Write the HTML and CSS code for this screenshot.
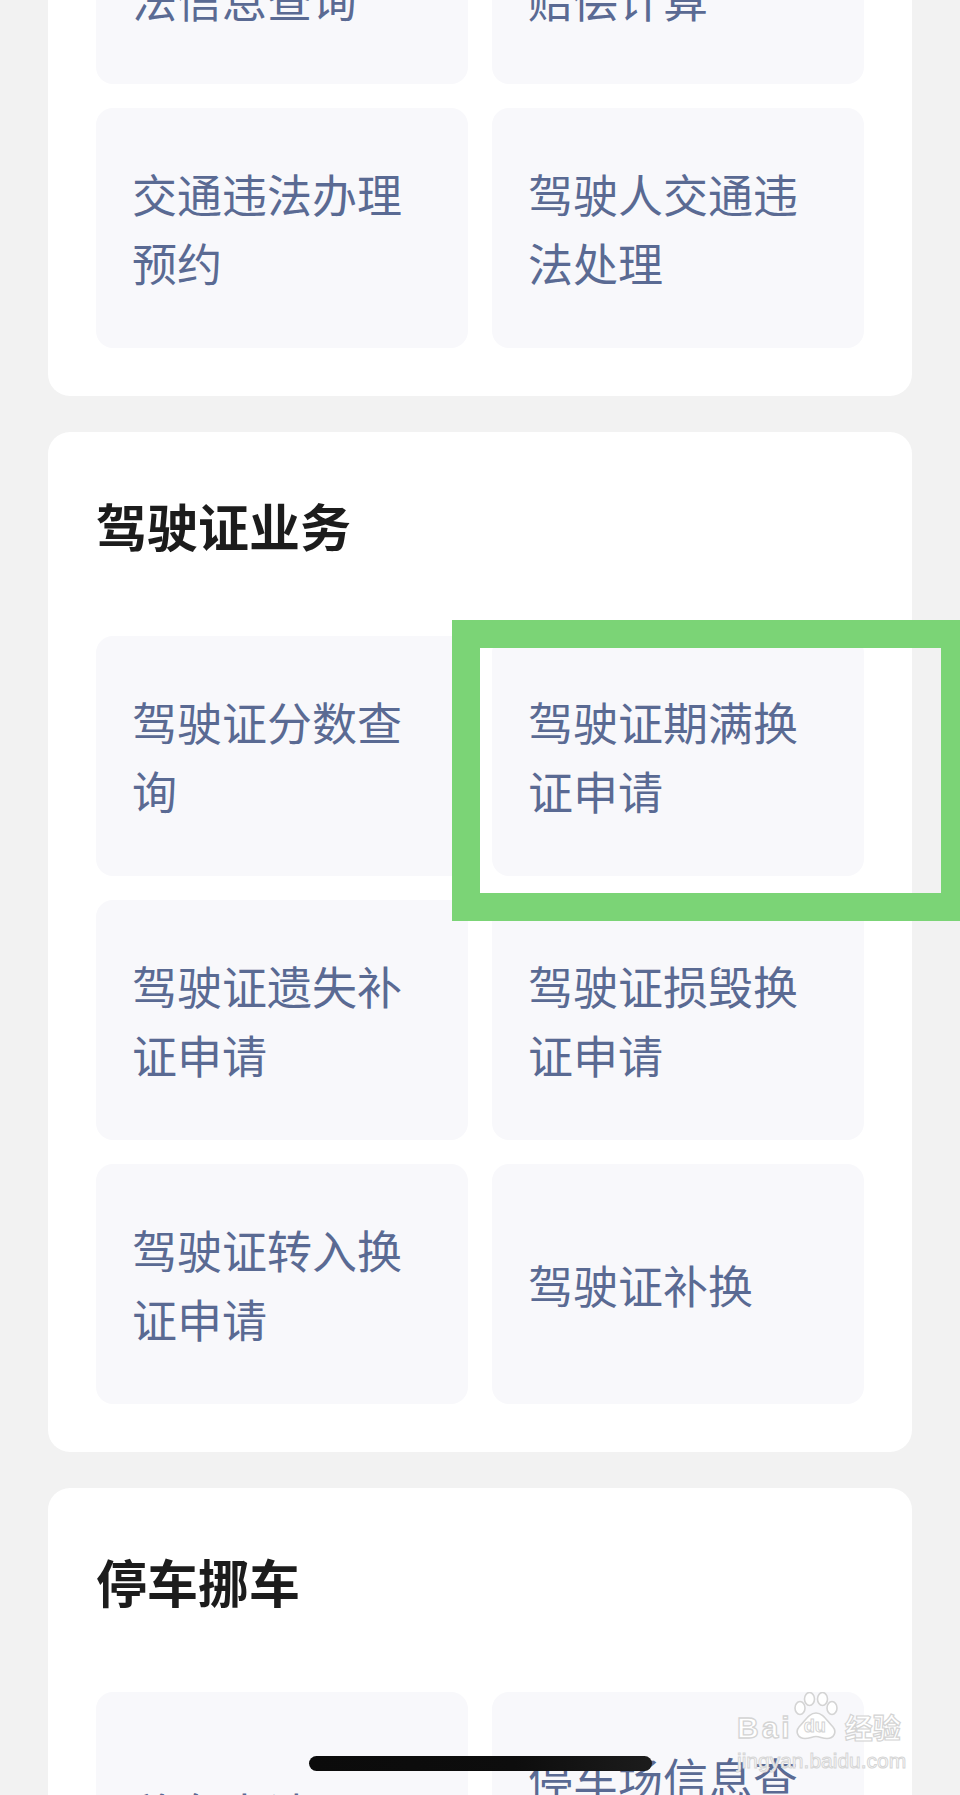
FILE: index.html
```html
<!DOCTYPE html>
<html lang="zh-CN">
<head>
<meta charset="utf-8">
<title>驾驶证业务</title>
<link rel="stylesheet" href="styles.css">
</head>
<body>
<div class="page">
  <section class="card card-first">
    <div class="grid">
      <div class="tile"><span>机动车交通违法信息查询</span></div>
      <div class="tile"><span>交通事故损害赔偿计算</span></div>
      <div class="tile"><span>交通违法办理预约</span></div>
      <div class="tile"><span>驾驶人交通违法处理</span></div>
    </div>
  </section>

  <section class="card">
    <h2 class="card-title">驾驶证业务</h2>
    <div class="grid">
      <div class="tile"><span>驾驶证分数查询</span></div>
      <div class="tile"><span>驾驶证期满换证申请</span></div>
      <div class="tile"><span>驾驶证遗失补证申请</span></div>
      <div class="tile"><span>驾驶证损毁换证申请</span></div>
      <div class="tile"><span>驾驶证转入换证申请</span></div>
      <div class="tile"><span>驾驶证补换</span></div>
    </div>
  </section>

  <section class="card">
    <h2 class="card-title">停车挪车</h2>
    <div class="grid">
      <div class="tile"><span>移车申请</span></div>
      <div class="tile"><span>停车场信息查询</span></div>
    </div>
  </section>
</div>

<div class="highlight"></div>

<div class="watermark">
  <div class="wm-row">
    <span class="wm-bai">Bai</span>
    <span class="wm-paw">
      <svg width="46" height="48" viewBox="0 0 46 48">
        <g fill="#ffffff" stroke="#d4d4d4" stroke-width="1.6">
          <ellipse cx="7" cy="16" rx="5" ry="6.5"/>
          <ellipse cx="16.5" cy="7" rx="5" ry="6.5"/>
          <ellipse cx="29.5" cy="7" rx="5" ry="6.5"/>
          <ellipse cx="39" cy="16" rx="5" ry="6.5"/>
          <path d="M23 21 C16 21 12 29 6 35 C2 40 5 46.5 12 46.5 C17 46.5 19 44.5 23 44.5 C27 44.5 29 46.5 34 46.5 C41 46.5 44 40 40 35 C34 29 30 21 23 21 Z"/>
        </g>
      </svg>
      <span class="wm-du">du</span>
    </span>
    <span class="wm-jy">经验</span>
  </div>
  <div class="wm-url">jingyan.baidu.com</div>
</div>

<div class="home-bar"></div>
</body>
</html>
```

FILE: styles.css
```css
html, body {
  margin: 0;
  padding: 0;
}

body {
  width: 960px;
  height: 1795px;
  overflow: hidden;
  position: relative;
  background: #f2f2f2;
  font-family: "Noto Sans CJK SC", "Noto Sans", sans-serif;
}

.page {
  display: flex;
  flex-direction: column;
  gap: 36px;
  padding: 0 48px;
}

.card {
  background: #ffffff;
  border-radius: 22px;
  padding: 48px;
}

.card-first {
  margin-top: -204px;
}

.card-title {
  margin: 0 0 66px 0;
  height: 90px;
  line-height: 90px;
  font-size: 51px;
  font-weight: 700;
  color: #1c1c1c;
}

.grid {
  display: grid;
  grid-template-columns: 372px 372px;
  grid-auto-rows: 240px;
  gap: 24px;
}

.tile {
  background: #f8f8fb;
  border-radius: 17px;
  padding: 0 36px;
  display: flex;
  align-items: center;
}

.tile span {
  font-size: 45px;
  line-height: 69px;
  color: #5a6a93;
}

.highlight {
  position: absolute;
  left: 452px;
  top: 620px;
  width: 461px;
  height: 245px;
  border: 28px solid #7bd476;
}

.home-bar {
  position: absolute;
  left: 309px;
  top: 1756px;
  width: 343px;
  height: 15px;
  border-radius: 8px;
  background: linear-gradient(90deg, #0b0b0b 0%, #0d0d0d 60%, #1c1c1c 100%);
}

.watermark {
  position: absolute;
  left: 737px;
  top: 1692px;
  width: 190px;
  font-family: "Liberation Sans", Arial, sans-serif;
  color: #ffffff;
}

.wm-row {
  display: flex;
  align-items: flex-end;
  height: 48px;
}

.wm-bai {
  font-size: 30px;
  font-weight: 700;
  line-height: 24px;
  letter-spacing: 3px;
  -webkit-text-stroke: 1.3px #d4d4d4;
  color: #ffffff;
}

.wm-paw {
  position: relative;
  width: 46px;
  height: 48px;
}

.wm-paw svg {
  display: block;
}

.wm-du {
  position: absolute;
  left: 11px;
  top: 25px;
  font-size: 18px;
  font-weight: 700;
  line-height: 18px;
  color: #ffffff;
  -webkit-text-stroke: 1px #d4d4d4;
}

.wm-jy {
  font-family: "Noto Sans CJK SC", sans-serif;
  font-size: 28px;
  font-weight: 700;
  line-height: 26px;
  margin-left: 6px;
  color: #ffffff;
  -webkit-text-stroke: 1.2px #d4d4d4;
}

.wm-url {
  margin-top: 10px;
  font-size: 21px;
  line-height: 21px;
  color: #ffffff;
  -webkit-text-stroke: 1px #d6d6d6;
}
```
